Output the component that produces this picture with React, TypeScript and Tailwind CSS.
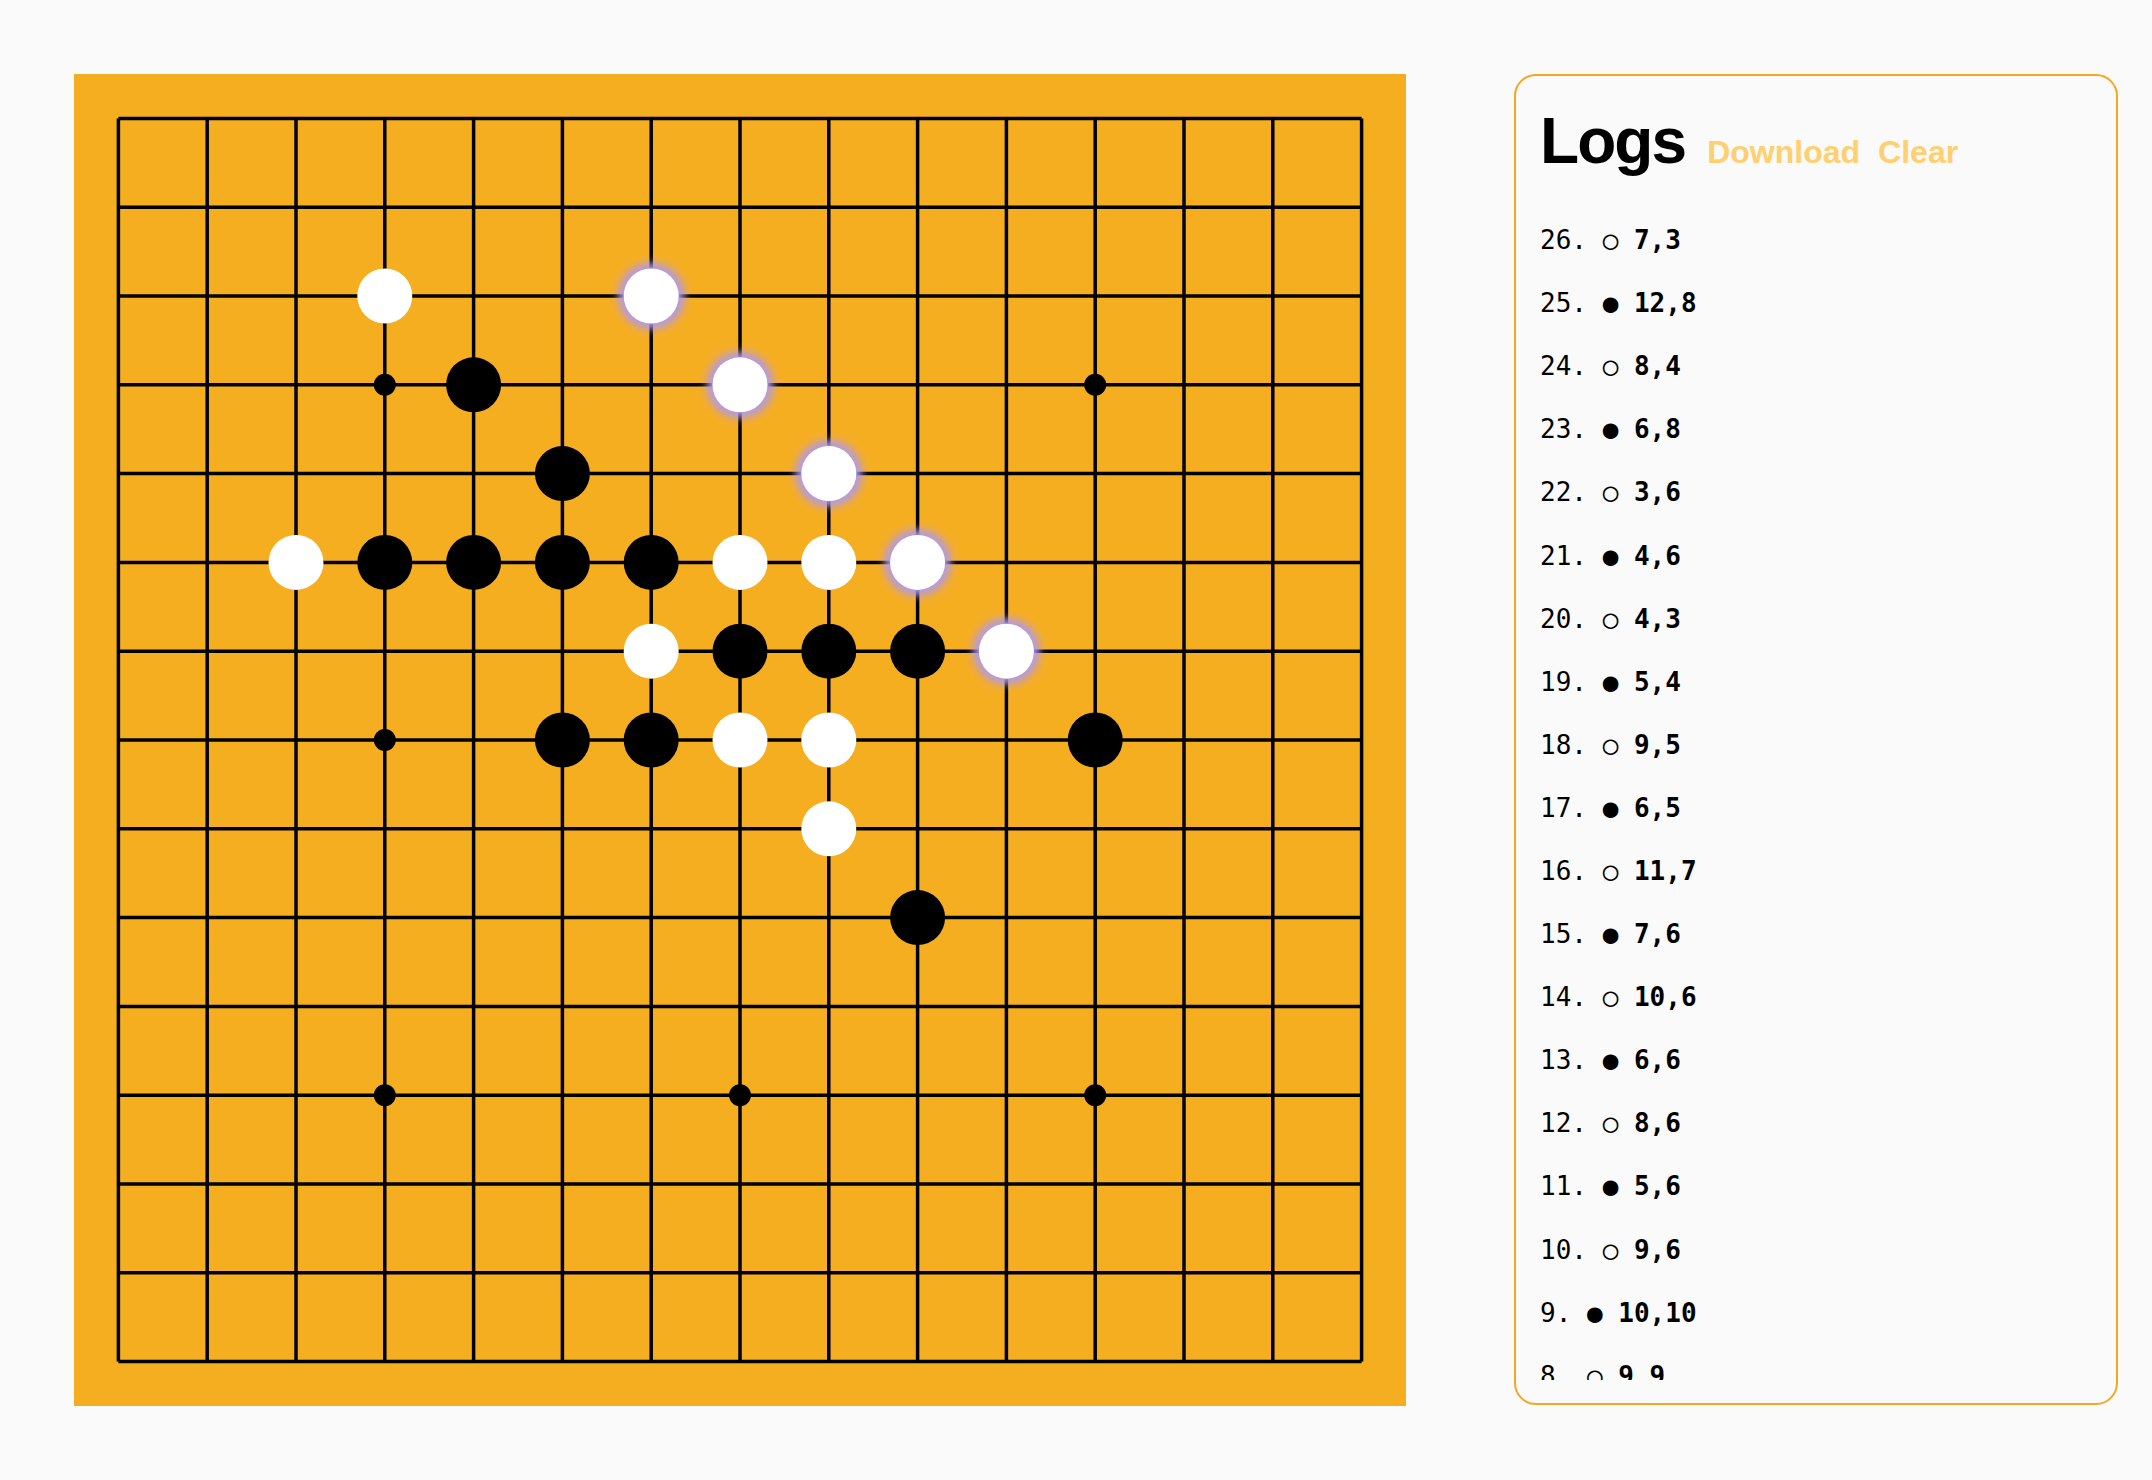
import React from "react";

// moves in play order, 1-indexed board coords; odd = black
const moves: [number, number][] = [
  [8, 7], [7, 7], [9, 7], [8, 8], [10, 7], [9, 8], [7, 8], [9, 9], [10, 10],
  [9, 6], [5, 6], [8, 6], [6, 6], [10, 6], [7, 6], [11, 7], [6, 5], [9, 5],
  [5, 4], [4, 3], [4, 6], [3, 6], [6, 8], [8, 4], [12, 8], [7, 3],
];

const winning = ["6,2", "7,3", "8,4", "9,5", "10,6"];
const stars = [3, 7, 11];
const SIZE = 1332;
const CELL = SIZE / 15;
const pos = (i: number) => CELL / 2 + CELL * i;

function Board() {
  return (
    <div className="w-[1332px] h-[1332px] shrink-0 bg-[#f6ae21]">
      <svg width={SIZE} height={SIZE} viewBox={`0 0 ${SIZE} ${SIZE}`}>
        <defs>
          <filter id="glow" x="-50%" y="-50%" width="200%" height="200%">
            <feGaussianBlur stdDeviation="5" />
          </filter>
        </defs>
        {Array.from({ length: 15 }, (_, i) => (
          <g key={i} stroke="#000" strokeWidth={3.5}>
            <line x1={pos(0)} y1={pos(i)} x2={pos(14)} y2={pos(i)} />
            <line x1={pos(i)} y1={pos(0)} x2={pos(i)} y2={pos(14)} />
          </g>
        ))}
        {stars.map((x) =>
          stars.map((y) => <circle key={`${x}-${y}`} cx={pos(x)} cy={pos(y)} r={11} fill="#000" />)
        )}
        {moves.map(([x, y], i) => {
          const cx = x - 1;
          const cy = y - 1;
          const black = i % 2 === 0;
          const win = !black && winning.includes(`${cx},${cy}`);
          return (
            <g key={i}>
              {win && <circle cx={pos(cx)} cy={pos(cy)} r={33} fill="#ad98f8" filter="url(#glow)" />}
              <circle cx={pos(cx)} cy={pos(cy)} r={27.5} fill={black ? "#000" : "#fff"} />
            </g>
          );
        })}
      </svg>
    </div>
  );
}

function Logs() {
  const rows = moves.map((m, i) => ({ n: i + 1, black: i % 2 === 0, m })).reverse();
  return (
    <div className="w-[604px] h-[1331px] shrink-0 border-2 border-[#f5a623] rounded-[22px] flex flex-col pl-[24px] pt-[33px] pb-[23px]">
      <div className="flex items-baseline h-[64px] font-['Liberation_Sans',Arial,sans-serif]">
        <h1 className="text-[64px] leading-none font-bold text-black tracking-[-0.03em]">Logs</h1>
        <button className="ml-[22px] text-[32px] leading-none font-bold text-[#ffcf70]">Download</button>
        <button className="ml-[18px] text-[32px] leading-none font-bold text-[#ffcf70]">Clear</button>
      </div>
      <ul className="mt-[36px] flex-1 min-h-0 overflow-hidden font-['DejaVu_Sans_Mono',monospace] text-[26px] text-black">
        {rows.map((r) => (
          <li key={r.n} className="h-[63.1px] flex items-center whitespace-pre">
            <span>{`${r.n}. `}</span>
            <span>{r.black ? "●" : "○"}</span>
            <span>{" "}</span>
            <span className="font-bold">{`${r.m[0]},${r.m[1]}`}</span>
          </li>
        ))}
      </ul>
    </div>
  );
}

export default function App() {
  return (
    <div className="min-h-screen bg-[#fafafa] flex items-start pt-[74px] pl-[74px] gap-[108px]">
      <Board />
      <Logs />
    </div>
  );
}
